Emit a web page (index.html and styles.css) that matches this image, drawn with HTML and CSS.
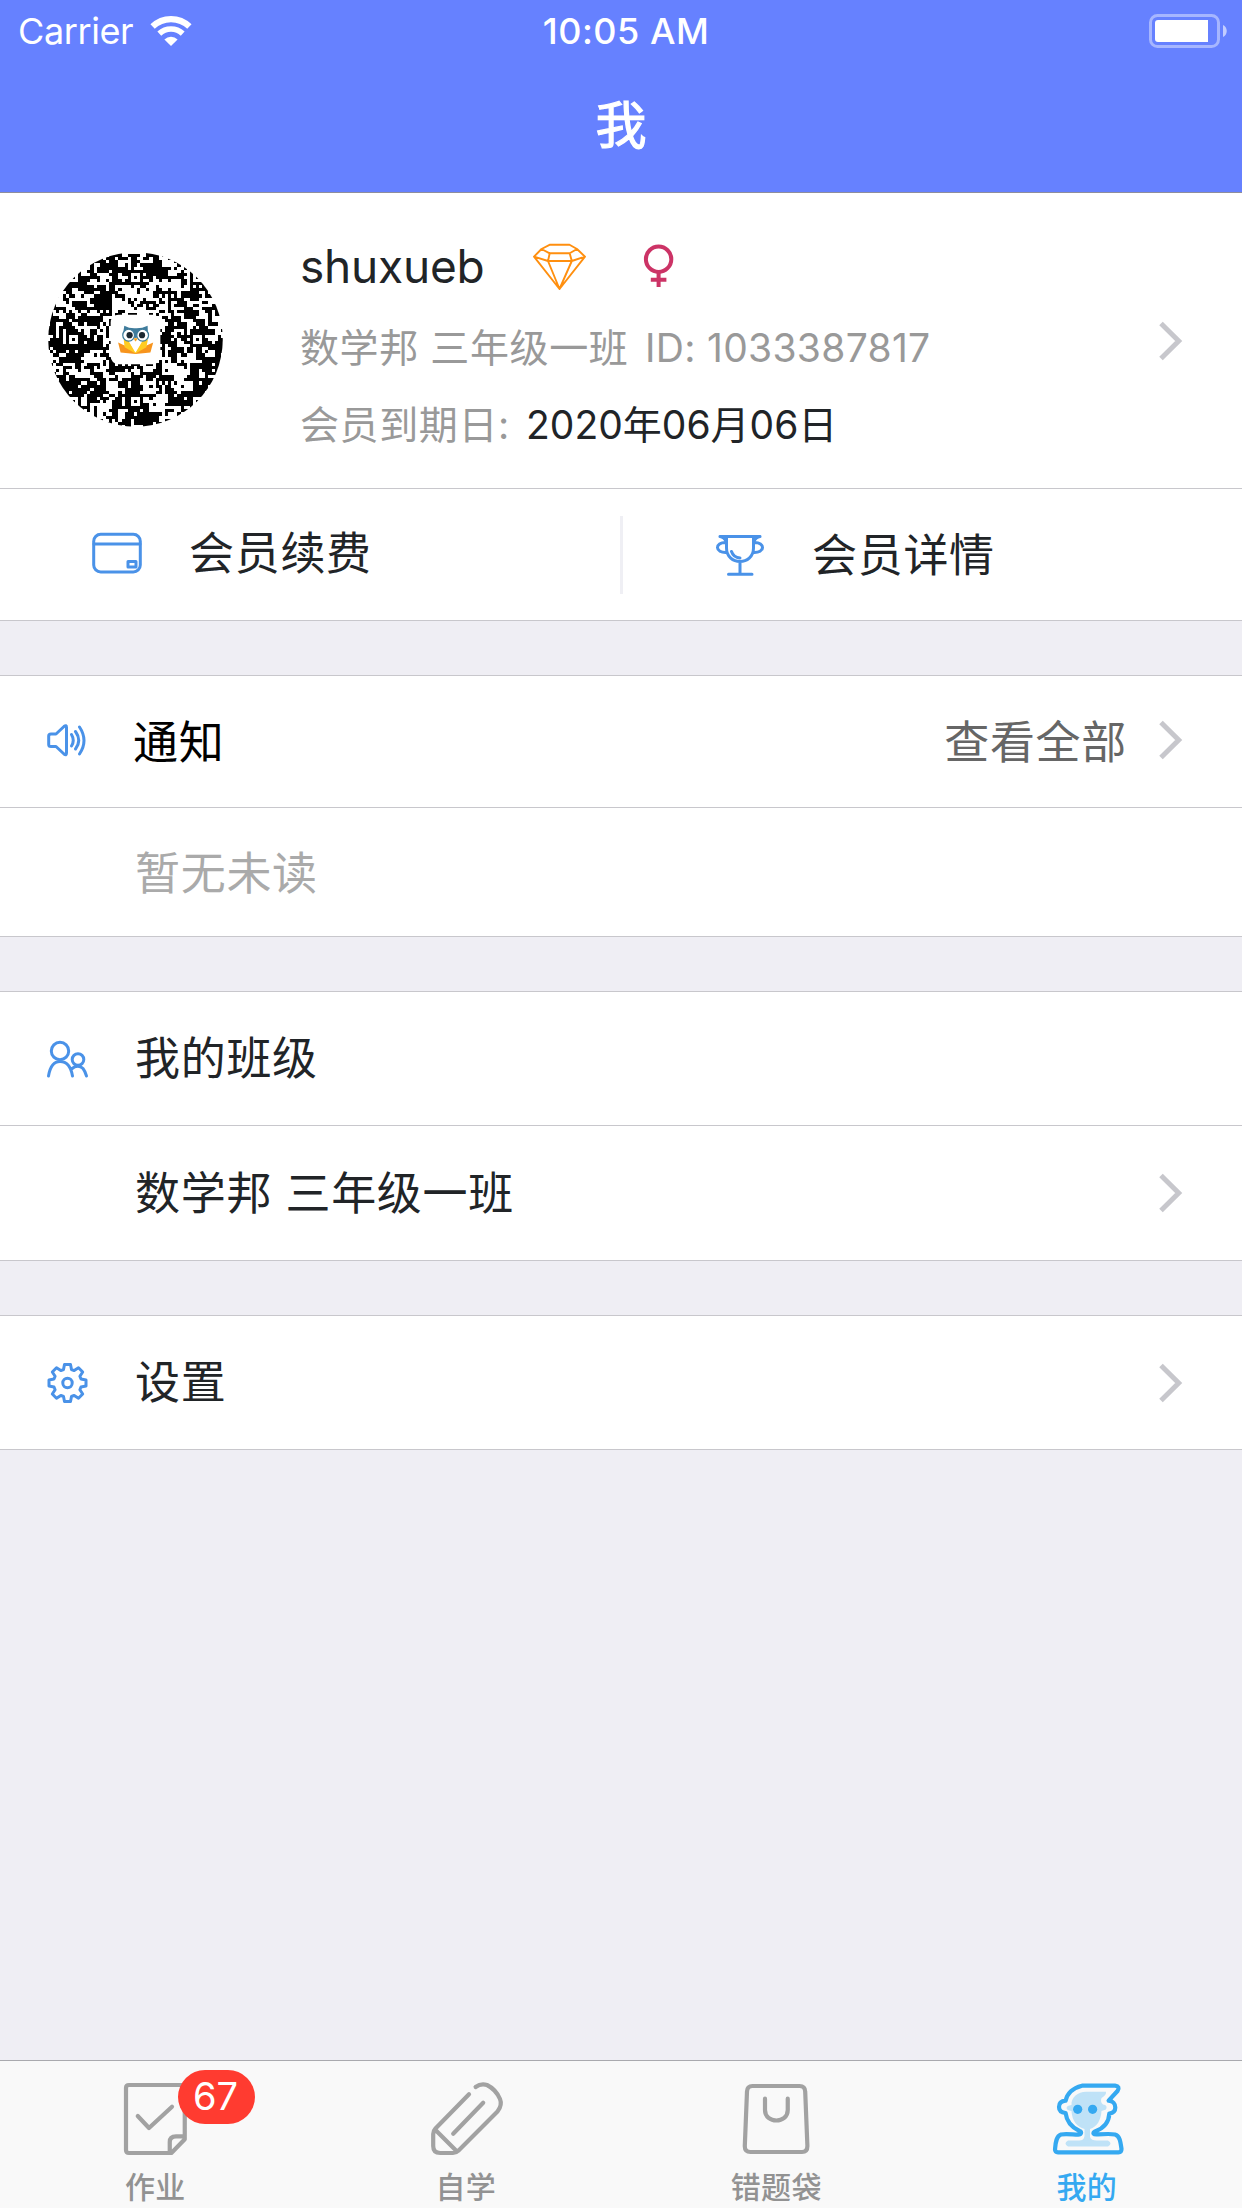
FILE: index.html
```html
<!DOCTYPE html>
<html lang="zh-CN">
<head>
<meta charset="utf-8">
<title>我</title>
<link rel="stylesheet" href="styles.css">
</head>
<body>
<div class="app">
  <header class="header">
    <div class="status">
      <div class="status-left">
        <span class="carrier">Carrier</span>
        <svg class="wifi" width="42" height="30" viewBox="0 0 42 30" fill="none">
          <path d="M2.600 10.600A26.500 26.500 0 0 1 39.400 10.600" stroke="#fff" stroke-width="6.200"/>
          <path d="M9.300 17.600A17 17 0 0 1 32.700 17.600" stroke="#fff" stroke-width="5.600"/>
          <path d="M14.400 23.400A9.500 9.500 0 0 1 27.600 23.400L21 30Z" fill="#fff"/>
        </svg>
      </div>
      <div class="time">10:05 AM</div>
      <svg class="battery" width="80" height="36" viewBox="0 0 80 36">
        <rect x="2.500" y="2.500" width="68" height="31" rx="7" fill="none" stroke="#fff" stroke-opacity=".42" stroke-width="3"/>
        <path d="M10 7H60V29H10A3 3 0 0 1 7 26V10A3 3 0 0 1 10 7Z" fill="#fff"/>
        <path d="M75 12C80 14 80 22 75 24Z" fill="#fff" fill-opacity=".6"/>
      </svg>
    </div>
    <h1 class="title">我</h1>
  </header>

  <section class="profile">
    <svg class="avatar" width="177" height="177" viewBox="0 0 57 57">
      <defs><clipPath id="round"><circle cx="28.500" cy="28.500" r="28.100"/></clipPath></defs>
      <path id="code" clip-path="url(#round)" fill="#000" shape-rendering="crispEdges"/>
      <rect x="20.500" y="20.500" width="16" height="16" rx="2.500" fill="#fff"/>
      <g transform="translate(20.500 20.500)">
        <path d="M2.400 9L5 10.200 8 12.300 11 10.200 13.700 9 12.800 12.200 8 12.700 3.200 12.200Z" fill="#f7941d"/>
        <path d="M5.200 7.500L8 12.300 10.800 7.500 12 8 11.500 10.500 8 12.500 4.500 10.500 4.200 8Z" fill="#ffcc21"/>
        <path d="M4.400 3.600Q6 4.500 8 4.400 10 4.500 11.900 3.600L12 6 8 7.500 4 6Z" fill="#3f7c9c"/>
        <circle cx="5.800" cy="6.600" r="1.900" fill="#fff" stroke="#3f7c9c" stroke-width=".4"/>
        <circle cx="10.300" cy="6.600" r="1.900" fill="#fff" stroke="#3f7c9c" stroke-width=".4"/>
        <circle cx="6.100" cy="6.600" r="1" fill="#1b2730"/><circle cx="10.100" cy="6.600" r="1" fill="#1b2730"/>
        <path d="M7.400 7.600H8.700L8 8.800Z" fill="#ffa51f"/>
        <path d="M6.600 9.700L8 8.600 9.400 9.700 8 11.900Z" fill="#fff"/>
      </g>
    </svg>
    <div class="info">
      <div class="name-row">
        <span class="name">shuxueb</span>
        <svg class="diamond" width="54" height="48" viewBox="532 243 54 48" fill="none" stroke="#ff8f0f" stroke-width="1.900" stroke-linejoin="round">
          <path d="M550 244.700H569.500L577 249 585 256.700 559.500 289 534 256.700 541.500 249ZM549.700 253.300H569.700L571.800 261H548ZM541.500 249L549.700 253.300M577 249L569.700 253.300M534 256.700L548 261 559.500 289 571.800 261 585 256.700"/>
        </svg>
        <svg class="female" width="32" height="44" viewBox="643 243 32 44" fill="none" stroke="#cc3366" stroke-width="4">
          <circle cx="658.600" cy="258.200" r="12.700"/><path d="M658.600 271V286M650.800 278.700H666.400"/>
        </svg>
      </div>
      <div class="meta"><span class="school">数学邦 三年级一班</span><span class="uid">ID: 1033387817</span></div>
      <div class="meta"><span class="due">会员到期日:</span><span class="date">2020年06月06日</span></div>
    </div>
    <svg class="chevron" width="26" height="42" viewBox="0 0 26 42"><path d="M3 3.500L20.700 21 3 38.500"/></svg>
  </section>

  <section class="member">
    <div class="member-item renew">
      <svg class="icon" width="50" height="42" viewBox="92 531 50 42">
        <rect x="93.700" y="533.300" width="46.600" height="37.600" rx="7"/><path d="M94 543H140M128 560.500H136V566H128Z"/>
      </svg>
      <span>会员续费</span>
    </div>
    <div class="member-item detail">
      <svg class="icon" width="50" height="42" viewBox="715 533 50 42">
        <path d="M720 535.500H760M726.500 536V547C726.500 565 753.500 565 753.500 547V536M720 535.500Q724 536 726.500 541M760 535.500Q756 536 753.500 541M726 541.500C714.500 541 714.500 552.500 727 551.500M754 541.500C765.500 541 765.500 552.500 753 551.500M740 561V573M728.500 573.300H752M731.500 550.500Q733.500 556.500 740 557"/>
      </svg>
      <span>会员详情</span>
    </div>
  </section>

  <section class="group">
    <div class="row notice">
      <svg class="icon" width="44" height="44" viewBox="46 719 44 44">
        <path d="M48.700 737Q48.700 735 51 735H56L64 727.500Q66.500 725.500 66.500 728.500V754Q66.500 757 64 755L56 747.500H51Q48.700 747.500 48.700 745.500ZM71.500 735.500Q75 741.500 71.500 747M75.500 732.500Q82 741.500 75.500 750M79.500 728Q88.500 741.500 79.500 755"/>
      </svg>
      <span class="label">通知</span>
      <span class="more">查看全部</span>
      <svg class="chevron" width="26" height="42" viewBox="0 0 26 42"><path d="M3 3.500L20.700 21 3 38.500"/></svg>
    </div>
    <div class="row empty"><span class="label">暂无未读</span></div>
  </section>

  <section class="group">
    <div class="row">
      <svg class="icon" width="44" height="44" viewBox="46 1037 44 44">
        <circle cx="60" cy="1051" r="8.700"/><circle cx="78" cy="1059.500" r="5.800"/>
        <path d="M48.500 1076C50 1067 53 1061.500 60 1061.500S71 1067 72.500 1076M71.500 1069Q78 1063.500 83 1068.500 85 1071 86.500 1076"/>
      </svg>
      <span class="label">我的班级</span>
    </div>
    <div class="row class-row">
      <span class="label solo">数学邦 三年级一班</span>
      <svg class="chevron" width="26" height="42" viewBox="0 0 26 42"><path d="M3 3.500L20.700 21 3 38.500"/></svg>
    </div>
  </section>

  <section class="group">
    <div class="row">
      <svg class="icon" width="44" height="44" viewBox="-21.500 -22 44 44">
        <circle r="4.700"/>
        <path d="M-4-13.500L-3-18.500H3L4-13.500 6.700-12.400 11-15.200 15.200-11 12.400-6.700 13.500-4 18.500-3V3L13.500 4 12.400 6.700 15.200 11 11 15.200 6.700 12.400 4 13.500 3 18.500H-3L-4 13.500-6.700 12.400-11 15.200-15.200 11-12.400 6.700-13.500 4-18.500 3V-3L-13.500-4-12.400-6.700-15.200-11-11-15.200-6.700-12.400Z"/>
      </svg>
      <span class="label">设置</span>
      <svg class="chevron" width="26" height="42" viewBox="0 0 26 42"><path d="M3 3.500L20.700 21 3 38.500"/></svg>
    </div>
  </section>

  <nav class="tabs">
    <div class="tab">
      <svg width="80" height="80" viewBox="0 0 80 80">
        <path d="M56.400 73H14Q11 73 11 70V8Q11 5 14 5H67Q69.750 5 69.750 8V59.300L56.400 73ZM69.750 56.300H61Q54.750 56.300 54.750 62V72M22.750 36L34 48 57 26.700"/>
      </svg>
      <span class="badge">67</span>
      <span>作业</span>
    </div>
    <div class="tab">
      <svg width="80" height="80" viewBox="0 0 80 80">
        <path d="M43 14.300L9.500 48.500Q7.200 51 7.200 54V66Q7.200 73 14.200 73H27Q30 73 32.600 70.500L71.500 31.500Q76.500 25 74 19 70 9.500 61 5 55 3 49.600 7M57.200 22.700L27.200 53.700M9.500 50L30 70.500"/>
      </svg>
      <span>自学</span>
    </div>
    <div class="tab">
      <svg width="80" height="80" viewBox="0 0 80 80">
        <path d="M16.500 6H63.500Q69 6 69.200 11.500L71.400 66Q71.400 72 66 72H14.500Q8.700 72 8.800 66L11 11.500Q11.200 6 16.500 6ZM29 18.700V30C29 44 51.750 44 51.750 30V18.700"/>
      </svg>
      <span>错题袋</span>
    </div>
    <div class="tab active">
      <svg width="80" height="80" viewBox="0 0 80 80">
        <path class="tint" d="M39 11.700H59Q59.500 15 54.500 18 53 22 56 24.500 61 25 59 29.500L54.500 31C54 40 50 47 43 49V57Q44 60.500 50 60.500H61Q66 63.500 61 66.500H21Q16 63.500 21 60.500H32Q37 60.500 37.500 56V49C30 47 25 41 24.500 31 18 30.500 18 25.500 24.500 25 24 17 31 12 39 11.700Z"/>
        <path d="M35 5.700H68Q73.500 6.500 70.500 11L61.600 20.700C66 21 68.300 24 68.300 27.500S66 33 62.300 33.500C62 43 56 48.500 48 51.500 45 53 46.500 54.700 50 54.500 57 54 63 53.500 68 54.500 73 56 73.500 62 74.500 69 74.500 71.500 73.500 72.300 71.500 72.300H11Q8 72.300 8 69.300C8.500 62 9.500 56 14 54.500 19 53.500 25 54.500 31 54.700 34.500 54.500 35 52 32.500 51 24 47 19.500 41 18.600 33 14 32.500 12 30 12 27 12 23 14.500 21 18.600 20.700 20.500 12 28 7.500 35 5.700Z"/>
        <circle class="eye" cx="30.700" cy="29.300" r="4.600"/><circle class="eye" cx="45.600" cy="29.300" r="4.600"/>
      </svg>
      <span>我的</span>
    </div>
  </nav>
</div>
<script src="code.js"></script>
</body>
</html>
```
FILE: code.js
```javascript
// Draws the dotted matrix code of the profile picture, 57 modules wide.
const size = 57;
const centres = [8, 28, 48];
let seed = 20200606;

function random() {
  seed = (seed * 1664525 + 1013904223) % 4294967296;
  return seed / 4294967296;
}

const cells = [];

function isDark(x, y) {
  const pick = random();
  const noise = random() < 0.56;
  for (const cx of centres) {
    for (const cy of centres) {
      const ring = Math.max(Math.abs(x - cx), Math.abs(y - cy));
      if (ring <= 2) return ring !== 1;
    }
  }
  // Some modules repeat a neighbour, which makes the short bars of a real code.
  if (pick < 0.25 && x > 0) return cells[y][x - 1];
  if (pick < 0.5 && y > 0) return cells[y - 1][x];
  return noise;
}

let d = '';
for (let y = 0; y < size; y++) {
  cells.push([]);
  for (let x = 0; x < size; x++) {
    cells[y][x] = isDark(x, y);
    if (cells[y][x]) d += `M${x} ${y}h1v1h-1z`;
  }
}
document.getElementById('code').setAttribute('d', d);
```
FILE: styles.css
```css
* { box-sizing: border-box; }
body {
  margin: 0;
  background: #efeef4;
  color: #212427;
  font-family: Inter, "Noto Sans CJK SC", sans-serif;
  font-size: 45px;
}
svg { display: block; flex: none; }
.app { width: 1242px; height: 2208px; display: flex; flex-direction: column; }

.header { height: 193px; background: #6681ff; border-bottom: 1px solid #8e8e9c; color: #fff; }
.status { height: 60px; display: grid; grid-template-columns: 1fr auto 1fr; align-items: center; font-size: 36px; padding: 0 14px 0 18px; }
.status-left { display: flex; align-items: center; gap: 17px; line-height: 62px; }
.carrier { letter-spacing: -.4px; }
.time { font-weight: 500; line-height: 62px; letter-spacing: .5px; padding-left: 6px; }
.battery { justify-self: end; }
.title { margin: 0; height: 132px; line-height: 132px; text-align: center; font-size: 51px; font-weight: 400; -webkit-text-stroke: 1.2px #fff; }

.profile { height: 296px; background: #fff; border-bottom: 1px solid #c8c7cc; display: flex; align-items: center; padding: 0 58px 0 47px; }
.avatar { margin-bottom: 2px; }
.info { flex: 1; padding-left: 76px; height: 280px; padding-top: 22px; }
.name-row { display: flex; align-items: flex-start; height: 86px; }
.name { width: 232px; font-size: 46px; line-height: 86px; letter-spacing: -.2px; }
.diamond { margin-top: 20px; }
.female { margin: 21px 0 0 57px; }
.meta { display: flex; height: 77px; line-height: 77px; font-size: 39px; color: #999; white-space: pre; }
.school { width: 345px; letter-spacing: .6px; }
.uid { letter-spacing: .3px; }
.due { width: 226px; letter-spacing: .6px; }
.date { color: #212427; }
.chevron { fill: none; stroke: #c7c7cc; stroke-width: 5; }

.member { height: 132px; background: #fff; border-bottom: 1px solid #c8c7cc; display: flex; letter-spacing: .7px; }
.member-item { display: flex; align-items: center; gap: 47px; }
.member-item span { padding-bottom: 4px; }
.icon { fill: none; stroke: #4a92e8; stroke-width: 3; stroke-linecap: round; stroke-linejoin: round; }
.renew { width: 620px; padding: 0 0 4px 92px; }
.detail { width: 622px; padding-left: 95px; background: linear-gradient(#efeff4, #efeff4) 0 27px / 3px 78px no-repeat; }

.group { margin-top: 54px; background: #fff; border-top: 1px solid #c8c7cc; letter-spacing: .7px; }
.row { height: 134px; border-bottom: 1px solid #c8c7cc; display: flex; align-items: center; padding: 0 58px 0 46px; }
.row .label { flex: 1; padding: 0 0 6px 45px; }
.row .label.solo, .row.empty .label { padding-left: 89px; }
.row.class-row { height: 135px; }
.row.notice { height: 132px; color: #000; padding-bottom: 3px; }
.row.notice .label { padding: 0 0 2px 43px; }
.row.empty { height: 129px; color: #aaa; }
.row.empty .label { padding-bottom: 4px; }
.more { color: #666; margin-right: 31px; padding-bottom: 2px; }

.tabs { margin-top: auto; height: 148px; background: #f9f9f9; border-top: 1px solid #a9a9ae; display: flex; }
.tab { position: relative; flex: 1; display: flex; flex-direction: column; align-items: center; padding-top: 19px; color: #929292; font-size: 30px; font-weight: 500; line-height: 55px; letter-spacing: .3px; }
.tab svg { fill: none; stroke: #a2a2a2; stroke-width: 4.2; stroke-linecap: round; stroke-linejoin: round; }
.badge { position: absolute; left: 178px; top: 9px; width: 77px; height: 54px; border-radius: 27px; background: #ff3b30; color: #fff; font-size: 38px; font-weight: 400; line-height: 53px; text-align: center; letter-spacing: 0; text-indent: -2px; }
.tab.active { color: #35a9f1; }
.tab.active svg { stroke: #35a9f1; }
.tab .tint { fill: #bfe2f7; stroke: none; }
.tab .eye { fill: #35a9f1; stroke: none; }
```
